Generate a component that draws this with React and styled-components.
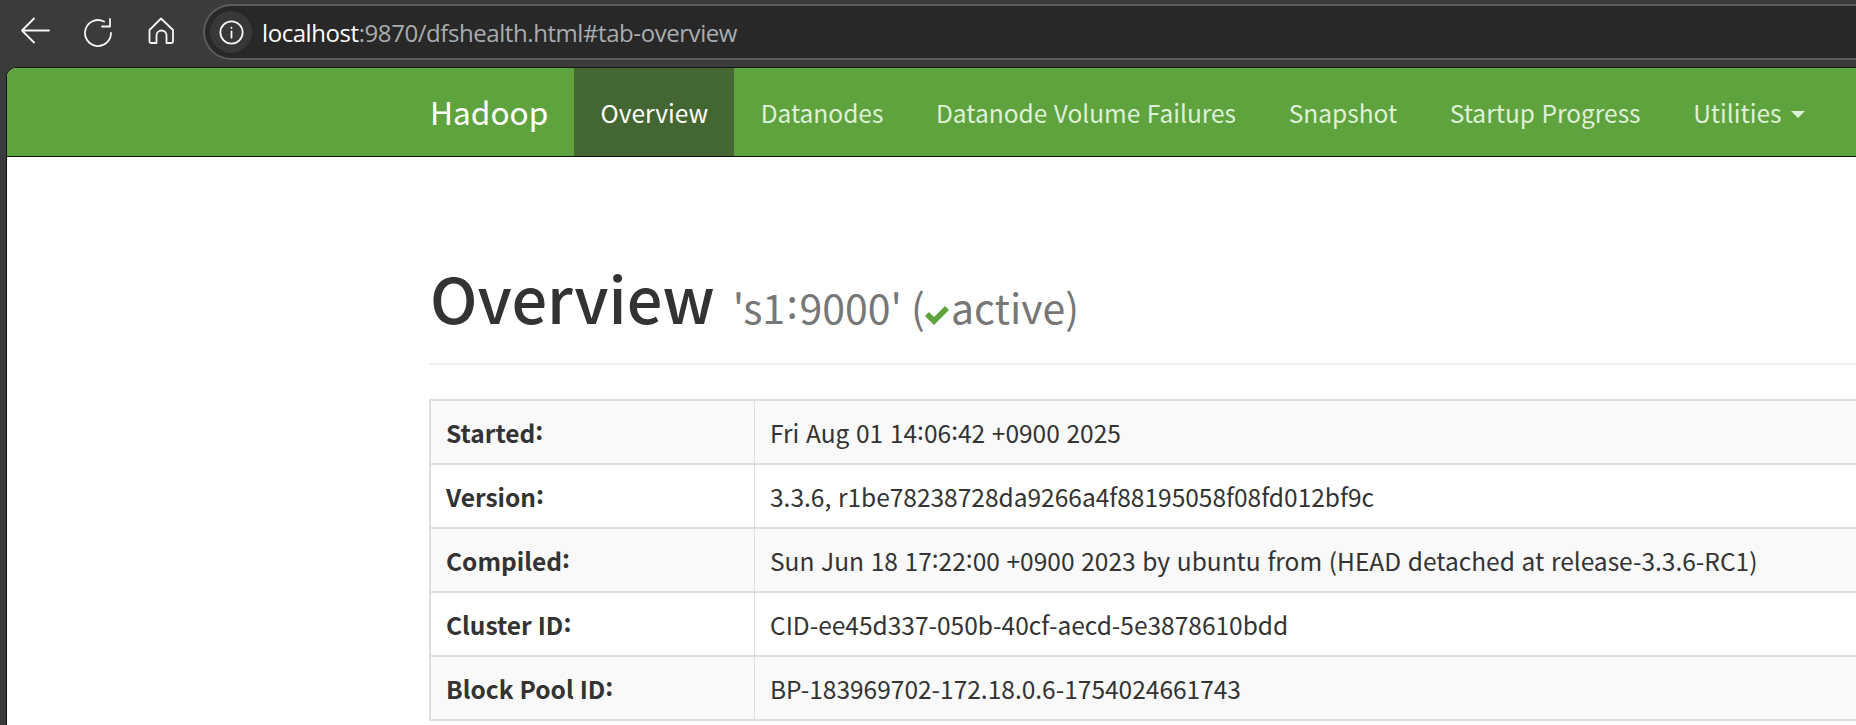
import React from "react";
import styled, { createGlobalStyle } from "styled-components";

const Global = createGlobalStyle`
  html, body { margin: 0; padding: 0; height: 725px; overflow: hidden; background: #3b3b3b; }
  #root { height: 725px; }
`;

const Window = styled.div`
  width: 1856px;
  height: 725px;
  overflow: hidden;
  display: flex;
  flex-direction: column;
  background: #3b3b3b;
`;

const Chrome = styled.header`
  flex: 0 0 67px;
  display: flex;
  align-items: center;
  padding: 0 0 3px 20px;
  box-sizing: border-box;
`;

const ToolIcon = styled.svg`
  flex: none;
  display: block;
  margin-right: ${(p) => p.$gap}px;
  fill: none;
  stroke: #f6f6f6;
  stroke-width: 1.8;
  stroke-linecap: round;
  stroke-linejoin: round;
`;

const Address = styled.div`
  flex: 1;
  height: 56px;
  box-sizing: border-box;
  border: 2px solid #5c5c5c;
  border-right: none;
  border-radius: 28px 0 0 28px;
  background: #282828;
  display: flex;
  align-items: center;
  padding-left: 5px;
`;

const InfoBadge = styled.span`
  width: 42px;
  height: 42px;
  border-radius: 50%;
  background: #383838;
  display: flex;
  align-items: center;
  justify-content: center;
  margin-right: 10px;
`;

const Url = styled.span`
  font: 400 24px "Open Sans", sans-serif;
  letter-spacing: -0.43px;
  color: #a9adb0;
`;

const Host = styled.span`
  color: #ffffff;
`;

const Page = styled.div`
  flex: 1;
  margin-left: 6px;
  background: #fff;
  border-top: 1px solid #111;
  border-left: 1px solid #111;
  border-radius: 10px 0 0 0;
  overflow: hidden;
  font-family: "Noto Sans CJK KR", "Noto Sans", sans-serif;
`;

const Navbar = styled.nav`
  height: 89px;
  box-sizing: border-box;
  background: #5fa33e;
  border-bottom: 1px solid #111;
  display: flex;
  padding-left: 423px;
  word-spacing: 1px;
`;

const Brand = styled.a`
  font-size: 31.6px;
  line-height: 87px;
  color: #fff;
  padding-right: 26px;
`;

const NavItem = styled.a`
  font-size: 24.5px;
  line-height: 87px;
  padding: 0 26.3px;
  color: ${(p) => (p.$active ? "#fff" : "#dff0d8")};
  background: ${(p) => (p.$active ? "#446633" : "transparent")};
  display: flex;
  align-items: center;
`;

const Caret = styled.span`
  width: 0;
  height: 0;
  margin-left: 9px;
  margin-top: 4px;
  border-top: 7px solid #dff0d8;
  border-left: 7px solid transparent;
  border-right: 7px solid transparent;
`;

const Main = styled.main`
  padding-left: 422px;
`;

const Heading = styled.div`
  margin-top: 84px;
  height: 124px;
  box-sizing: border-box;
  border-bottom: 2px solid #eee;
  display: flex;
  align-items: baseline;
  color: #333;
`;

const Title = styled.h1`
  margin: 0 0 0 1px;
  font-size: 63px;
  font-weight: 500;
  line-height: 112px;
`;

const Small = styled.small`
  font-size: 41px;
  color: #777;
  margin-left: 18px;
  white-space: pre;
`;

const Check = styled.svg`
  display: inline-block;
  vertical-align: -1px;
  margin: 0 2px 0 0;
  fill: #5fa33e;
`;

const Colon = styled.span`
  display: inline-block;
  line-height: 0;
  transform: translateY(-0.14em);
`;

const WideColon = styled(Colon)`
  margin: 0 1.5px;
`;

const Table = styled.div`
  margin-top: 34px;
  border: 2px solid #ddd;
  border-right: none;
  border-bottom: none;
  display: grid;
  grid-template-columns: 324px 1fr;
  color: #333;
`;

const Cell = styled.div`
  height: 64px;
  box-sizing: border-box;
  border-bottom: 2px solid #ddd;
  padding-left: 15px;
  display: flex;
  align-items: center;
  font-size: 24.5px;
  font-weight: ${(p) => (p.$head ? 700 : 400)};
  word-spacing: ${(p) => (p.$head ? 0.5 : 1.2)}px;
  background: ${(p) => (p.$odd ? "#f9f9f9" : "#fff")};
  border-right: ${(p) => (p.$head ? "1px solid #ddd" : "none")};
  white-space: pre;
`;

const rows = [
  ["Started:", "Fri Aug 01 14:06:42 +0900 2025"],
  ["Version:", "3.3.6, r1be78238728da9266a4f88195058f08fd012bf9c"],
  ["Compiled:", "Sun Jun 18 17:22:00 +0900 2023 by ubuntu from (HEAD detached at release-3.3.6-RC1)"],
  ["Cluster ID:", "CID-ee45d337-050b-40cf-aecd-5e3878610bdd"],
  ["Block Pool ID:", "BP-183969702-172.18.0.6-1754024661743"],
];

const nav = ["Datanodes", "Datanode Volume Failures", "Snapshot", "Startup Progress"];

const withColons = (text) =>
  text.split(":").flatMap((part, i) =>
    i === 0 ? [part] : [<Colon key={i}>:</Colon>, part]
  );

export default function App() {
  return (
    <Window>
      <Global />
      <Chrome>
        <ToolIcon $gap={34} width="30" height="30" viewBox="0 0 30 30">
          <path d="M2 13.500H29M14 1.500 2 13.500 14 25.500" />
        </ToolIcon>
        <ToolIcon $gap={33} width="30" height="30" viewBox="0 0 30 30">
          <path d="M20 4.500A13 13 0 1 0 27 16M26 2V9.500H18" />
        </ToolIcon>
        <ToolIcon $gap={28} width="28" height="30" viewBox="0 0 28 30">
          <path d="M2.500 13 14 1.500 26 13V24.500a1.500 1.500 0 0 1-1.500 1.500H19.500V18.500a5 5 0 0 0-10 0V26H4a1.500 1.500 0 0 1-1.500-1.500Z" />
        </ToolIcon>
        <Address>
          <InfoBadge>
            <svg width="25" height="25" viewBox="0 0 24 24" fill="none" stroke="#f6f6f6" strokeWidth="1.700" strokeLinecap="round">
              <circle cx="12" cy="12" r="10.700" />
              <path d="M12 11v6M12 7.400v.2" />
            </svg>
          </InfoBadge>
          <Url>
            <Host>localhost</Host>:9870/dfshealth.html#tab-overview
          </Url>
        </Address>
      </Chrome>
      <Page>
        <Navbar>
          <Brand>Hadoop</Brand>
          <NavItem $active>Overview</NavItem>
          {nav.map((n) => (
            <NavItem key={n}>{n}</NavItem>
          ))}
          <NavItem>
            Utilities
            <Caret />
          </NavItem>
        </Navbar>
        <Main>
          <Heading>
            <Title>Overview</Title>
            <Small>
              's1<WideColon>:</WideColon>9000' (
              <Check width="24" height="20" viewBox="0 0 24 20">
                <path d="M0 11 4 7l5 5L20 1l4 4L9 20Z" />
              </Check>
              active)
            </Small>
          </Heading>
          <Table>
            {rows.map(([k, v], i) => (
              <React.Fragment key={k}>
                <Cell $head $odd={i % 2 === 0}>
                  <span>{withColons(k)}</span>
                </Cell>
                <Cell $odd={i % 2 === 0}>
                  <span>{withColons(v)}</span>
                </Cell>
              </React.Fragment>
            ))}
          </Table>
        </Main>
      </Page>
    </Window>
  );
}
